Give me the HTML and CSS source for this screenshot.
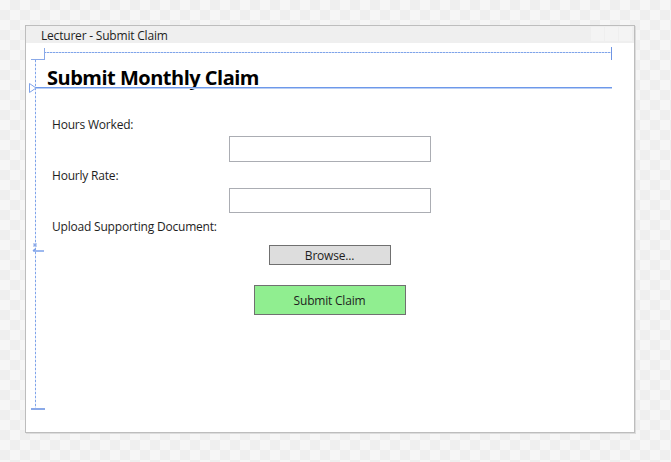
FILE: index.html
```html
<!DOCTYPE html>
<html>
<head>
<meta charset="utf-8">
<link rel="stylesheet" href="styles.css">
</head>
<body>
<div class="window">
  <div class="titlebar">
    <span class="title">Lecturer - Submit Claim</span>
    <div class="tbtns"><span></span><span></span><span></span></div>
  </div>
  <div class="content">
    <h1 class="heading">Submit Monthly Claim</h1>
    <div class="form">
      <label class="lbl">Hours Worked:</label>
      <div class="textbox tb1"></div>
      <label class="lbl">Hourly Rate:</label>
      <div class="textbox tb2"></div>
      <label class="lbl">Upload Supporting Document:</label>
      <button class="browse">Browse...</button>
      <button class="submit">Submit Claim</button>
    </div>
  </div>

  <div class="adorn dot-h"></div>
  <div class="adorn tick-r"></div>
  <div class="adorn corner-v"></div>
  <div class="adorn corner-h"></div>
  <div class="adorn dot-v"></div>
  <div class="adorn bottom-h"></div>
  <div class="adorn head-line"></div>
  <svg class="adorn tri" width="8" height="10" viewBox="0 0 8 10"><path d="M0.5 0.5 L7 5 L0.5 9.5 Z" fill="#fff" stroke="#7ea2ea" stroke-width="1"/></svg>
  <svg class="adorn rowmark" width="14" height="12" viewBox="0 0 14 12"><path d="M4 1 L4 5 M2 3 L6 3 M2.5 1.5 L5.5 4.5 M5.5 1.5 L2.5 4.5" stroke="#8aa9e8" stroke-width="1" fill="none"/><path d="M2 9 L13 9 M2 9 L4 7" stroke="#7ea2ea" stroke-width="1.4" fill="none"/></svg>
</div>
</body>
</html>
```
FILE: styles.css
```css
html, body {
  margin: 0;
  padding: 0;
}
body {
  width: 671px;
  height: 462px;
  overflow: hidden;
  background-color: #f6f6f6;
  background-image: conic-gradient(#efefef 25%, transparent 0 50%, #efefef 0 75%, transparent 0);
  background-size: 20px 20px;
  font-family: "Segoe UI", "Open Sans", sans-serif;
  color: #000;
}
.window {
  position: relative;
  margin: 25px 0 0 25px;
  width: 608px;
  height: 406px;
  border: 1px solid #bdbdbd;
  box-shadow: 1px 1px 0 #dcdcdc;
  background: #fff;
}
.titlebar {
  height: 17px;
  background: #efefef;
  display: flex;
  align-items: flex-start;
  justify-content: space-between;
}
.title {
  font-size: 12px;
  line-height: 16px;
  padding-top: 2px;
  padding-left: 15px;
  color: #1e1e1e;
  letter-spacing: -0.2px;
}
.tbtns {
  display: flex;
  gap: 1px;
  padding-right: 2px;
  padding-top: 1px;
}
.tbtns span {
  width: 13px;
  height: 14px;
  background: #f4f4f4;
}
.content {
  display: flex;
  flex-direction: column;
}
.heading {
  margin: 23px 0 0 21px;
  font-size: 20px;
  font-weight: 700;
  line-height: 24px;
  height: 24px;
  letter-spacing: -0.5px;
}
.form {
  margin: 26px 0 0 9px;
  width: 589px;
  display: flex;
  flex-direction: column;
  align-items: center;
}
.lbl {
  align-self: flex-start;
  margin-left: 17px;
  font-size: 12px;
  line-height: 18px;
  color: #1e1e1e;
  letter-spacing: -0.2px;
}
.textbox {
  box-sizing: border-box;
  width: 202px;
  border: 1px solid #abadb3;
  background: #fff;
}
.tb1 { height: 26px; margin: 2px 0 5px; }
.tb2 { height: 25px; margin: 3px 0 5px; }
.browse {
  box-sizing: border-box;
  margin-top: 9px;
  width: 122px;
  height: 20px;
  background: #dddddd;
  border: 1px solid #707070;
  font-family: inherit;
  font-size: 12px;
  line-height: 16px;
  padding: 1px 0 0;
  color: #1e1e1e;
  letter-spacing: -0.2px;
}
.submit {
  box-sizing: border-box;
  margin-top: 20px;
  width: 152px;
  height: 30px;
  background: #90ee90;
  border: 1px solid #707070;
  font-family: inherit;
  font-size: 12px;
  padding: 1px 0 0;
  color: #1e1e1e;
  letter-spacing: -0.2px;
}
.adorn {
  position: absolute;
}
.dot-h {
  top: 26px;
  left: 18px;
  width: 567px;
  height: 1px;
  background: repeating-linear-gradient(90deg, #7fa4ea 0 2px, #c9d8f6 2px 3px);
}
.tick-r {
  top: 21px;
  left: 585px;
  width: 1px;
  height: 13px;
  background: #6f95e4;
}
.corner-v {
  top: 22px;
  left: 18px;
  width: 1px;
  height: 12px;
  background: #8aa9e8;
}
.corner-h {
  top: 33px;
  left: 5px;
  width: 14px;
  height: 1px;
  background: #8aa9e8;
}
.dot-v {
  top: 34px;
  left: 9px;
  width: 1px;
  height: 348px;
  background: repeating-linear-gradient(180deg, #7fa4ea 0 2px, #dfe8fa 2px 4px);
}
.bottom-h {
  top: 382px;
  left: 5px;
  width: 14px;
  height: 2px;
  background: #8aa9e8;
}
.head-line {
  top: 61px;
  left: 9px;
  width: 577px;
  height: 1px;
  background: #6d98ea;
  box-shadow: 0 1px 0 #b9cef4;
}
.tri {
  top: 57px;
  left: 3px;
}
.rowmark {
  top: 216px;
  left: 5px;
}
```
